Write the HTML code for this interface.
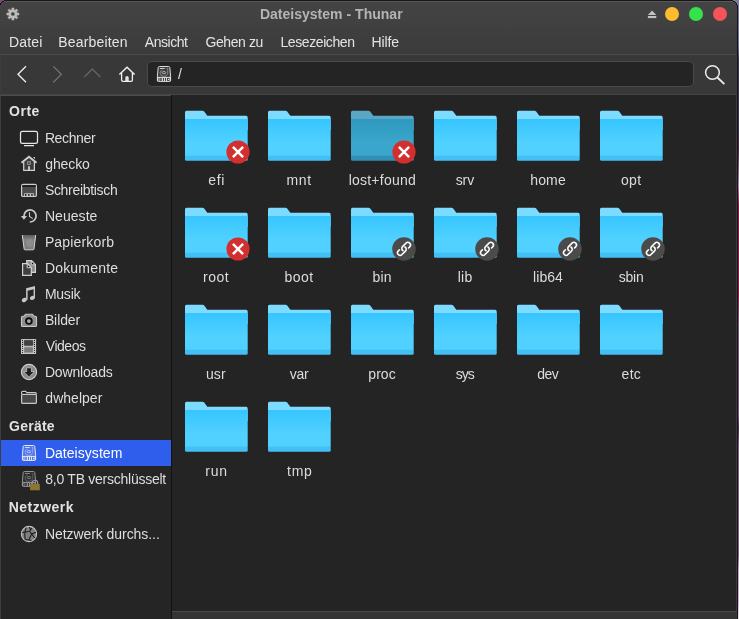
<!DOCTYPE html>
<html><head><meta charset="utf-8"><title>Dateisystem - Thunar</title><style>
*{box-sizing:border-box}
html,body{margin:0;padding:0}
body{width:739px;height:619px;overflow:hidden;position:relative;background:#6f6a8e;font-family:"Liberation Sans", sans-serif;}
#bgl{position:absolute;left:0;top:0;width:8px;height:8px;background:#7d4b79}
#bgr{position:absolute;left:731px;top:0;width:8px;height:619px;background:linear-gradient(#7d7a9b 0,#75729a 45px,#3c3752 60px,#3a3450 125px,#4a2a48 150px,#a88aa8 185px,#8a2048 205px,#8c2248 295px,#7a5a7a 325px,#7a5a7c 415px,#4a3048 428px,#806080 445px,#806282 555px,#c0a2c2 570px,#c8b0cc 600px,#e8e0ea 619px)}
#win{position:absolute;left:0;top:0;width:738px;height:619px;background:#242424;overflow:hidden;clip-path:polygon(4px 0,733px 0,733px 1px,735px 1px,735px 2px,736px 2px,736px 3px,737px 3px,737px 5px,738px 5px,738px 619px,0 619px,0 3px,1px 3px,1px 2px,2px 2px,2px 1px,4px 1px)}
#tb{position:absolute;left:0;top:0;width:738px;height:28px;background:linear-gradient(#444444,#404040)}
#tbl0{position:absolute;left:0;top:0;width:733px;height:1px;background:#161616}
#tbl1{position:absolute;left:4px;top:1px;width:729px;height:1px;background:#585858}
#mb{position:absolute;left:0;top:28px;width:738px;height:26px;background:linear-gradient(#3f3f3f,#3b3b3b)}
#sep1{position:absolute;left:0;top:54px;width:738px;height:1px;background:#4b4b4b}
#tool{position:absolute;left:0;top:55px;width:738px;height:39px;background:#383838}
#sep2{position:absolute;left:0;top:94px;width:738px;height:1px;background:#464646}
#side{position:absolute;left:1px;top:95px;width:170px;height:524px;background:#252525}
#sep3{position:absolute;left:0;top:95px;width:171px;height:1px;background:#4b4b4b}
#lb{position:absolute;left:0;top:28px;width:1px;height:591px;background:#3d3d3d}
#vsep{position:absolute;left:171px;top:95px;width:1px;height:524px;background:#121212}
#main{position:absolute;left:172px;top:95px;width:564px;height:516px;background:#242424}
#stat{position:absolute;left:172px;top:611px;width:564px;height:8px;background:#343434;border-top:1px solid #494949}
#rb1{position:absolute;left:736px;top:28px;width:1px;height:615px;background:#3a3a3a}
#rb2{position:absolute;left:737px;top:5px;width:1px;height:615px;background:#161616}
#sel{position:absolute;left:1px;top:440px;width:170px;height:26px;background:#2f5eec}
#path{position:absolute;left:147px;top:61px;width:547px;height:26px;background:#242424;border:1px solid #4a4a4a;border-radius:5px}
.t{position:absolute;white-space:nowrap;line-height:normal}
#txt{position:absolute;left:0;top:0;width:739px;height:619px;will-change:transform;transform:translateZ(0)}
.fw{position:absolute;width:66px;height:52px}
.fo{position:absolute;left:0;top:0}
.bd{position:absolute;left:42px;top:30px}
.ic{position:absolute}
.px{position:absolute;width:1px;height:1px}
.dot{position:absolute;width:14.4px;height:14.4px;border-radius:50%;top:6.8px}
</style></head><body>
<div id="bgl"></div><div id="bgr"></div>
<div id="win">
<div id="tb"></div><div id="tbl0"></div><div id="tbl1"></div>
<div id="mb"></div><div id="sep1"></div><div id="tool"></div><div id="sep2"></div>
<div id="lb"></div>
<div id="side"></div><div id="sep3"></div><div id="vsep"></div><div id="main"></div><div id="stat"></div>
<div id="sel"></div>
<div id="path"></div>
<div id="rb1"></div><div id="rb2"></div><i class="px" style="left:2px;top:1px;background:#141414"></i><i class="px" style="left:3px;top:1px;background:#141414"></i><i class="px" style="left:1px;top:2px;background:#141414"></i><i class="px" style="left:0px;top:3px;background:#141414"></i><i class="px" style="left:0px;top:4px;background:#141414"></i><i class="px" style="left:733px;top:1px;background:#141414"></i><i class="px" style="left:734px;top:1px;background:#141414"></i><i class="px" style="left:735px;top:2px;background:#141414"></i><i class="px" style="left:736px;top:3px;background:#141414"></i><i class="px" style="left:736px;top:4px;background:#141414"></i>
<div class="dot" style="left:664.9px;background:#fdbc30"></div>
<div class="dot" style="left:688.9px;background:#34e24b"></div>
<div class="dot" style="left:712.9px;background:#f5535a"></div>
<svg class="ic" style="left:0;top:0" width="739" height="619" viewBox="0 0 739 619">
<path d="M11.84 9.83 L11.86 7.94 L13.94 7.94 L13.96 9.83 L15.09 10.30 L16.45 8.98 L17.92 10.45 L16.60 11.81 L17.07 12.94 L18.96 12.96 L18.96 15.04 L17.07 15.06 L16.60 16.19 L17.92 17.55 L16.45 19.02 L15.09 17.70 L13.96 18.17 L13.94 20.06 L11.86 20.06 L11.84 18.17 L10.71 17.70 L9.35 19.02 L7.88 17.55 L9.20 16.19 L8.73 15.06 L6.84 15.04 L6.84 12.96 L8.73 12.94 L9.20 11.81 L7.88 10.45 L9.35 8.98 L10.71 10.30 Z M15.00 14.0 A2.1 2.1 0 1 0 10.80 14.0 A2.1 2.1 0 1 0 15.00 14.0 Z" fill="#bcbcbc" fill-rule="evenodd" stroke="#bcbcbc" stroke-width="0.5" stroke-linejoin="round"/>
<path d="M652.1 10.4 L656.3 15 H647.9 Z" fill="#c2c2c2"/><rect x="647.9" y="16" width="8.4" height="2.1" fill="#c2c2c2"/>
<path d="M26 66.3 L18 74.3 L26 82.3" fill="none" stroke="#f2f2f2" stroke-width="1.3"/>
<path d="M53.3 66.3 L61.3 74.3 L53.3 82.3" fill="none" stroke="#7c7c7c" stroke-width="1.1"/>
<path d="M84.3 77 L92.3 69 L100.3 77" fill="none" stroke="#6a6a6a" stroke-width="1.1"/>
<path d="M119.4 74.6 L127 67.2 L134.6 74.6" fill="none" stroke="#f0f0f0" stroke-width="1.4" stroke-linejoin="miter"/>
<path d="M121.6 73 V80 Q121.6 81.4 123 81.4 H131 Q132.4 81.4 132.4 80 V73" fill="none" stroke="#f0f0f0" stroke-width="1.3"/>
<path d="M125.3 81 V77.6 A1.7 1.7 0 0 1 128.7 77.6 V81 Z" fill="#e2e2e2"/>
<circle cx="712.45" cy="72.5" r="6.85" fill="none" stroke="#ececec" stroke-width="1.5"/><path d="M717.4 77.5 L724.4 84.2" stroke="#ececec" stroke-width="1.85" fill="none"/>
<g transform="translate(135,-379)">
<path d="M24.6 445.5 H33.4 Q34.6 445.5 34.8 446.6 L35.6 455.6 V459.6 Q35.6 460.4 34.8 460.4 H23.2 Q22.4 460.4 22.4 459.6 V455.6 L23.2 446.6 Q23.4 445.5 24.6 445.5 Z" fill="#e6e6e6" fill-opacity="0.14" stroke="#e6e6e6" stroke-width="0.95"/>
<path d="M22.4 456.4 H35.6" stroke="#e6e6e6" stroke-width="1" fill="none"/>
<path d="M22.9 456 V460" stroke="#e6e6e6" stroke-width="1" fill="none"/><path d="M35.1 456 V460" stroke="#e6e6e6" stroke-width="1" fill="none"/>
<g fill="#e6e6e6"><rect x="24.2" y="456.8" width="0.6" height="3.3" fill-opacity="0.75"/><rect x="26.8" y="456.8" width="1.1" height="3.3"/><rect x="29" y="456.8" width="0.95" height="3.3"/><rect x="31" y="456.8" width="0.95" height="3.3"/><rect x="25.2" y="457.5" width="1.2" height="1.6" fill-opacity="0.35"/><rect x="33" y="457.9" width="1.1" height="1.1"/></g>
<rect x="25" y="447" width="4.8" height="0.9" fill="#e6e6e6" fill-opacity="0.9"/>
<ellipse cx="28.9" cy="451.6" rx="1.8" ry="1.1" fill="none" stroke="#e6e6e6" stroke-width="0.8" stroke-opacity="0.85"/>
<path d="M31.5 447.4 H32.7 V452.5 A3.9 3.6 0 0 1 25 452 A3.9 3.4 0 0 1 27.5 448.9" fill="none" stroke="#e6e6e6" stroke-width="0.7" stroke-opacity="0.6"/>
</g>
<rect x="20.5" y="131.4" width="17" height="12" rx="1.9" fill="none" stroke="#e6e6e6" stroke-width="1.25"/><path d="M24 145.5 H34" stroke="#e6e6e6" stroke-width="1.25"/>
<path d="M23.7 162.4 V170.4 H34.4 V162.4 L29 157.8 Z" fill="#3c3c3c"/>
<path d="M23.7 162 V170.4 H34.4 V162" fill="none" stroke="#d2d2d2" stroke-width="1.2"/>
<path d="M21.5 162.7 L29 156.7 L36.5 162.7" fill="none" stroke="#cdcdcd" stroke-width="2"/>
<rect x="27.1" y="161.2" width="3.7" height="3.7" fill="#929292"/><rect x="28.3" y="162.4" width="1.3" height="1.3" fill="#0c0c0c"/>
<rect x="28.1" y="166.2" width="1.8" height="4" fill="#cfcfcf"/>
<path d="M33 157.2 L35 156.9 L35 159.2 Z" fill="#cfcfcf"/>
<rect x="21.6" y="184.4" width="14.8" height="12.1" rx="1.6" fill="#4b4b4b" stroke="#d0d0d0" stroke-width="1.2"/>
<rect x="22.2" y="185.2" width="13.6" height="1.7" fill="#1c1c1c"/>
<rect x="24.1" y="193.2" width="9.8" height="3.3" rx="0.8" fill="#c4c4c4"/>
<g fill="#050505"><rect x="25" y="194.2" width="1.5" height="1.5"/><rect x="28.1" y="194.2" width="1.5" height="1.5"/><rect x="31.2" y="194.2" width="1.5" height="1.5"/></g>
<path d="M24 215.9 A6.05 6.05 0 1 1 30.4 222.0" fill="none" stroke="#cacaca" stroke-width="1.7" stroke-linecap="round"/>
<path d="M20.9 216.1 H27 L23.95 219.8 Z" fill="#cacaca"/>
<path d="M29.5 212.3 V216.5 L32.8 218.6" fill="none" stroke="#cacaca" stroke-width="1.1"/>
<defs><linearGradient id="tg" x1="0" y1="0" x2="0" y2="1"><stop offset="0" stop-color="#5c5c5c"/><stop offset="0.35" stop-color="#858585"/><stop offset="1" stop-color="#7c7c7c"/></linearGradient></defs>
<path d="M22.2 235 H35.8 L34 249.4 H24.1 Z" fill="url(#tg)"/>
<ellipse cx="29.6" cy="243.2" rx="3.4" ry="4.2" fill="#9c9c9c" fill-opacity="0.45"/>
<path d="M22.3 235 L24.2 249.3 Q24.3 249.8 24.9 249.8 H33.2 Q33.8 249.8 33.9 249.3 L35.7 235" fill="none" stroke="#d4d4d4" stroke-width="1"/>
<path d="M26.7 260.7 H31.6 L35.4 264.5 V272.3 H26.7 Z" fill="#8c8c8c" stroke="#d2d2d2" stroke-width="1.2"/>
<path d="M31.3 261 V264.8 H35.2 Z" fill="#0a0a0a" stroke="#d2d2d2" stroke-width="1"/>
<path d="M22.6 263.6 H27.5 L31.3 267.4 V275.4 H22.6 Z" fill="#3f3f3f" stroke="#d2d2d2" stroke-width="1.2"/>
<path d="M27.2 263.9 V267.7 H31.1 Z" fill="#0a0a0a" stroke="#d2d2d2" stroke-width="1"/>
<path d="M26.1 288.3 L35 285.9 V297.6 H33.6 V289.2 L27.6 290.8 V299.8 H26.1 Z" fill="#c6c6c6"/>
<ellipse cx="24.3" cy="300" rx="2.6" ry="2" transform="rotate(-20 24.3 300)" fill="#c6c6c6"/><ellipse cx="32.4" cy="297.9" rx="2.6" ry="2" transform="rotate(-20 32.4 297.9)" fill="#c6c6c6"/>
<path d="M22.6 316.3 H23.8 L25.6 314.3 H32.4 L34.2 316.3 H35.4 Q36.5 316.3 36.5 317.4 V325.4 Q36.5 326.5 35.4 326.5 H22.6 Q21.5 326.5 21.5 325.4 V317.4 Q21.5 316.3 22.6 316.3 Z" fill="#8e8e8e" stroke="#c8c8c8" stroke-width="1.1"/>
<circle cx="28.9" cy="321" r="2.85" fill="#bababa" stroke="#0c0c0c" stroke-width="1.95"/><circle cx="28.9" cy="321" r="0.85" fill="#8e8e8e"/>
<rect x="21" y="339" width="15.1" height="15" rx="0.6" fill="#cacaca"/>
<rect x="24.2" y="340.3" width="8.7" height="5.3" rx="0.7" fill="#404040" stroke="#2c2c2c" stroke-width="0.5"/><rect x="24.2" y="347.2" width="8.7" height="5.4" rx="0.7" fill="#7c7c7c" stroke="#8a8a8a" stroke-width="0.4"/>
<g fill="#1a1a1a"><circle cx="22.5" cy="340.40" r="0.6"/><circle cx="22.5" cy="342.42" r="0.6"/><circle cx="22.5" cy="344.44" r="0.6"/><circle cx="22.5" cy="346.46" r="0.6"/><circle cx="22.5" cy="348.48" r="0.6"/><circle cx="22.5" cy="350.50" r="0.6"/><circle cx="22.5" cy="352.52" r="0.6"/><circle cx="34.5" cy="340.40" r="0.6"/><circle cx="34.5" cy="342.42" r="0.6"/><circle cx="34.5" cy="344.44" r="0.6"/><circle cx="34.5" cy="346.46" r="0.6"/><circle cx="34.5" cy="348.48" r="0.6"/><circle cx="34.5" cy="350.50" r="0.6"/><circle cx="34.5" cy="352.52" r="0.6"/></g>
<circle cx="29" cy="372" r="7.6" fill="#8c8c8c" stroke="#d2d2d2" stroke-width="1.1"/>
<path d="M27.1 368.2 H30.9 V372 H33.4 L29 376.5 L24.6 372 H27.1 Z" fill="#222" stroke="#b2b2b2" stroke-width="1.5" stroke-linejoin="miter"/><path d="M27.1 368.2 H30.9 V372 H33.4 L29 376.5 L24.6 372 H27.1 Z" fill="#1f1f1f"/>
<path d="M21.6 394.3 V392.6 Q21.6 391.4 22.8 391.4 H25.6 L26.8 392.6 H35.2 Q36.4 392.6 36.4 393.8 V394.3" fill="#0e0e0e" stroke="#c6c6c6" stroke-width="1.2"/>
<rect x="21.6" y="394.3" width="14.8" height="9.1" rx="1" fill="#494949" stroke="#c6c6c6" stroke-width="1.2"/>
<g transform="translate(0,0)">
<path d="M24.6 445.5 H33.4 Q34.6 445.5 34.8 446.6 L35.6 455.6 V459.6 Q35.6 460.4 34.8 460.4 H23.2 Q22.4 460.4 22.4 459.6 V455.6 L23.2 446.6 Q23.4 445.5 24.6 445.5 Z" fill="#eeeeee" fill-opacity="0.16" stroke="#eeeeee" stroke-width="0.95"/>
<path d="M22.4 456.4 H35.6" stroke="#eeeeee" stroke-width="1" fill="none"/>
<path d="M22.9 456 V460" stroke="#eeeeee" stroke-width="1" fill="none"/><path d="M35.1 456 V460" stroke="#eeeeee" stroke-width="1" fill="none"/>
<g fill="#eeeeee"><rect x="24.2" y="456.8" width="0.6" height="3.3" fill-opacity="0.75"/><rect x="26.8" y="456.8" width="1.1" height="3.3"/><rect x="29" y="456.8" width="0.95" height="3.3"/><rect x="31" y="456.8" width="0.95" height="3.3"/><rect x="25.2" y="457.5" width="1.2" height="1.6" fill-opacity="0.35"/><rect x="33" y="457.9" width="1.1" height="1.1"/></g>
<rect x="25" y="447" width="4.8" height="0.9" fill="#eeeeee" fill-opacity="0.9"/>
<ellipse cx="28.9" cy="451.6" rx="1.8" ry="1.1" fill="none" stroke="#eeeeee" stroke-width="0.8" stroke-opacity="0.85"/>
<path d="M31.5 447.4 H32.7 V452.5 A3.9 3.6 0 0 1 25 452 A3.9 3.4 0 0 1 27.5 448.9" fill="none" stroke="#eeeeee" stroke-width="0.7" stroke-opacity="0.6"/>
</g>
<g transform="translate(0,26)">
<path d="M24.6 445.5 H33.4 Q34.6 445.5 34.8 446.6 L35.6 455.6 V459.6 Q35.6 460.4 34.8 460.4 H23.2 Q22.4 460.4 22.4 459.6 V455.6 L23.2 446.6 Q23.4 445.5 24.6 445.5 Z" fill="#9a9a9a" fill-opacity="0.08" stroke="#9a9a9a" stroke-width="0.95"/>
<path d="M22.4 456.4 H35.6" stroke="#9a9a9a" stroke-width="1" fill="none"/>
<path d="M22.9 456 V460" stroke="#9a9a9a" stroke-width="1" fill="none"/><path d="M35.1 456 V460" stroke="#9a9a9a" stroke-width="1" fill="none"/>
<g fill="#9a9a9a"><rect x="24.2" y="456.8" width="0.6" height="3.3" fill-opacity="0.75"/><rect x="26.8" y="456.8" width="1.1" height="3.3"/><rect x="29" y="456.8" width="0.95" height="3.3"/><rect x="31" y="456.8" width="0.95" height="3.3"/><rect x="25.2" y="457.5" width="1.2" height="1.6" fill-opacity="0.35"/><rect x="33" y="457.9" width="1.1" height="1.1"/></g>
<rect x="25" y="447" width="4.8" height="0.9" fill="#9a9a9a" fill-opacity="0.9"/>
<ellipse cx="28.9" cy="451.6" rx="1.8" ry="1.1" fill="none" stroke="#9a9a9a" stroke-width="0.8" stroke-opacity="0.85"/>
<path d="M31.5 447.4 H32.7 V452.5 A3.9 3.6 0 0 1 25 452 A3.9 3.4 0 0 1 27.5 448.9" fill="none" stroke="#9a9a9a" stroke-width="0.7" stroke-opacity="0.6"/>
</g>
<path d="M32.3 484.5 V482.9 A2.7 2.7 0 0 1 37.7 482.9 V484.5" fill="none" stroke="#9a9a9a" stroke-width="1.1"/>
<rect x="30.1" y="484" width="9.7" height="6.3" fill="#8d7532"/>
<circle cx="29" cy="534" r="7.6" fill="#808080" stroke="#c4c4c4" stroke-width="1.1"/>
<g fill="none" stroke="#1a1a1a" stroke-width="1.05"><path d="M26.2 527.6 Q24 533 25.2 539.6"/><path d="M22.2 532.6 L28.6 531.4"/><path d="M29.4 527 L30.6 529.6 L29.6 531.2 L31.6 534 L34.8 538"/><path d="M31.6 534 L29 539.8"/><path d="M31.6 534 L35.8 532.2"/><path d="M25.2 539.6 L31.4 540.4"/><path d="M30.6 529.6 L32 528"/></g>
</svg><div class="fw" style="left:184px;top:110px"><svg class="fo" width="66" height="52" viewBox="0 0 66 52">
<defs><linearGradient id="gn" x1="0" y1="0" x2="0" y2="1"><stop offset="0" stop-color="#36c5ff"/><stop offset="0.55" stop-color="#50d1ff"/><stop offset="0.87" stop-color="#50d1ff"/><stop offset="0.88" stop-color="#43bff5"/><stop offset="1" stop-color="#43bff5"/></linearGradient></defs>
<path d="M1 2.2 Q1 0.7 2.5 0.7 L18.6 0.7 Q19.6 0.7 20.2 1.5 L23.3 5.8 L62.1 5.8 Q63.7 5.8 63.7 7.4 L63.7 20 L1 20 Z" fill="#7ddbff"/>
<path d="M1 9 L63.7 9 L63.7 49.3 Q63.7 50.8 62.2 50.8 L2.5 50.8 Q1 50.8 1 49.3 Z" fill="url(#gn)"/>
</svg>
<svg class="bd" width="24" height="24" viewBox="0 0 24 24"><circle cx="12" cy="12" r="11.6" fill="#d32f2f"/><path d="M6.9 6.9 L17.1 17.1 M17.1 6.9 L6.9 17.1" stroke="#fff" stroke-width="2.45" fill="none"/></svg>
</div>
<div class="fw" style="left:267px;top:110px"><svg class="fo" width="66" height="52" viewBox="0 0 66 52">
<defs><linearGradient id="gn" x1="0" y1="0" x2="0" y2="1"><stop offset="0" stop-color="#36c5ff"/><stop offset="0.55" stop-color="#50d1ff"/><stop offset="0.87" stop-color="#50d1ff"/><stop offset="0.88" stop-color="#43bff5"/><stop offset="1" stop-color="#43bff5"/></linearGradient></defs>
<path d="M1 2.2 Q1 0.7 2.5 0.7 L18.6 0.7 Q19.6 0.7 20.2 1.5 L23.3 5.8 L62.1 5.8 Q63.7 5.8 63.7 7.4 L63.7 20 L1 20 Z" fill="#7ddbff"/>
<path d="M1 9 L63.7 9 L63.7 49.3 Q63.7 50.8 62.2 50.8 L2.5 50.8 Q1 50.8 1 49.3 Z" fill="url(#gn)"/>
</svg>
</div>
<div class="fw" style="left:350px;top:110px"><svg class="fo" width="66" height="52" viewBox="0 0 66 52">
<defs><linearGradient id="gd" x1="0" y1="0" x2="0" y2="1"><stop offset="0" stop-color="#2f98bf"/><stop offset="0.55" stop-color="#3aa6cc"/><stop offset="0.87" stop-color="#3aa6cc"/><stop offset="0.88" stop-color="#2f8fb4"/><stop offset="1" stop-color="#2f8fb4"/></linearGradient></defs>
<path d="M1 2.2 Q1 0.7 2.5 0.7 L18.6 0.7 Q19.6 0.7 20.2 1.5 L23.3 5.8 L62.1 5.8 Q63.7 5.8 63.7 7.4 L63.7 20 L1 20 Z" fill="#5aa7c4"/>
<path d="M1 9 L63.7 9 L63.7 49.3 Q63.7 50.8 62.2 50.8 L2.5 50.8 Q1 50.8 1 49.3 Z" fill="url(#gd)"/>
</svg>
<svg class="bd" width="24" height="24" viewBox="0 0 24 24"><circle cx="12" cy="12" r="11.6" fill="#d32f2f"/><path d="M6.9 6.9 L17.1 17.1 M17.1 6.9 L6.9 17.1" stroke="#fff" stroke-width="2.45" fill="none"/></svg>
</div>
<div class="fw" style="left:433px;top:110px"><svg class="fo" width="66" height="52" viewBox="0 0 66 52">
<defs><linearGradient id="gn" x1="0" y1="0" x2="0" y2="1"><stop offset="0" stop-color="#36c5ff"/><stop offset="0.55" stop-color="#50d1ff"/><stop offset="0.87" stop-color="#50d1ff"/><stop offset="0.88" stop-color="#43bff5"/><stop offset="1" stop-color="#43bff5"/></linearGradient></defs>
<path d="M1 2.2 Q1 0.7 2.5 0.7 L18.6 0.7 Q19.6 0.7 20.2 1.5 L23.3 5.8 L62.1 5.8 Q63.7 5.8 63.7 7.4 L63.7 20 L1 20 Z" fill="#7ddbff"/>
<path d="M1 9 L63.7 9 L63.7 49.3 Q63.7 50.8 62.2 50.8 L2.5 50.8 Q1 50.8 1 49.3 Z" fill="url(#gn)"/>
</svg>
</div>
<div class="fw" style="left:516px;top:110px"><svg class="fo" width="66" height="52" viewBox="0 0 66 52">
<defs><linearGradient id="gn" x1="0" y1="0" x2="0" y2="1"><stop offset="0" stop-color="#36c5ff"/><stop offset="0.55" stop-color="#50d1ff"/><stop offset="0.87" stop-color="#50d1ff"/><stop offset="0.88" stop-color="#43bff5"/><stop offset="1" stop-color="#43bff5"/></linearGradient></defs>
<path d="M1 2.2 Q1 0.7 2.5 0.7 L18.6 0.7 Q19.6 0.7 20.2 1.5 L23.3 5.8 L62.1 5.8 Q63.7 5.8 63.7 7.4 L63.7 20 L1 20 Z" fill="#7ddbff"/>
<path d="M1 9 L63.7 9 L63.7 49.3 Q63.7 50.8 62.2 50.8 L2.5 50.8 Q1 50.8 1 49.3 Z" fill="url(#gn)"/>
</svg>
</div>
<div class="fw" style="left:599px;top:110px"><svg class="fo" width="66" height="52" viewBox="0 0 66 52">
<defs><linearGradient id="gn" x1="0" y1="0" x2="0" y2="1"><stop offset="0" stop-color="#36c5ff"/><stop offset="0.55" stop-color="#50d1ff"/><stop offset="0.87" stop-color="#50d1ff"/><stop offset="0.88" stop-color="#43bff5"/><stop offset="1" stop-color="#43bff5"/></linearGradient></defs>
<path d="M1 2.2 Q1 0.7 2.5 0.7 L18.6 0.7 Q19.6 0.7 20.2 1.5 L23.3 5.8 L62.1 5.8 Q63.7 5.8 63.7 7.4 L63.7 20 L1 20 Z" fill="#7ddbff"/>
<path d="M1 9 L63.7 9 L63.7 49.3 Q63.7 50.8 62.2 50.8 L2.5 50.8 Q1 50.8 1 49.3 Z" fill="url(#gn)"/>
</svg>
</div>
<div class="fw" style="left:184px;top:207px"><svg class="fo" width="66" height="52" viewBox="0 0 66 52">
<defs><linearGradient id="gn" x1="0" y1="0" x2="0" y2="1"><stop offset="0" stop-color="#36c5ff"/><stop offset="0.55" stop-color="#50d1ff"/><stop offset="0.87" stop-color="#50d1ff"/><stop offset="0.88" stop-color="#43bff5"/><stop offset="1" stop-color="#43bff5"/></linearGradient></defs>
<path d="M1 2.2 Q1 0.7 2.5 0.7 L18.6 0.7 Q19.6 0.7 20.2 1.5 L23.3 5.8 L62.1 5.8 Q63.7 5.8 63.7 7.4 L63.7 20 L1 20 Z" fill="#7ddbff"/>
<path d="M1 9 L63.7 9 L63.7 49.3 Q63.7 50.8 62.2 50.8 L2.5 50.8 Q1 50.8 1 49.3 Z" fill="url(#gn)"/>
</svg>
<svg class="bd" width="24" height="24" viewBox="0 0 24 24"><circle cx="12" cy="12" r="11.6" fill="#d32f2f"/><path d="M6.9 6.9 L17.1 17.1 M17.1 6.9 L6.9 17.1" stroke="#fff" stroke-width="2.45" fill="none"/></svg>
</div>
<div class="fw" style="left:267px;top:207px"><svg class="fo" width="66" height="52" viewBox="0 0 66 52">
<defs><linearGradient id="gn" x1="0" y1="0" x2="0" y2="1"><stop offset="0" stop-color="#36c5ff"/><stop offset="0.55" stop-color="#50d1ff"/><stop offset="0.87" stop-color="#50d1ff"/><stop offset="0.88" stop-color="#43bff5"/><stop offset="1" stop-color="#43bff5"/></linearGradient></defs>
<path d="M1 2.2 Q1 0.7 2.5 0.7 L18.6 0.7 Q19.6 0.7 20.2 1.5 L23.3 5.8 L62.1 5.8 Q63.7 5.8 63.7 7.4 L63.7 20 L1 20 Z" fill="#7ddbff"/>
<path d="M1 9 L63.7 9 L63.7 49.3 Q63.7 50.8 62.2 50.8 L2.5 50.8 Q1 50.8 1 49.3 Z" fill="url(#gn)"/>
</svg>
</div>
<div class="fw" style="left:350px;top:207px"><svg class="fo" width="66" height="52" viewBox="0 0 66 52">
<defs><linearGradient id="gn" x1="0" y1="0" x2="0" y2="1"><stop offset="0" stop-color="#36c5ff"/><stop offset="0.55" stop-color="#50d1ff"/><stop offset="0.87" stop-color="#50d1ff"/><stop offset="0.88" stop-color="#43bff5"/><stop offset="1" stop-color="#43bff5"/></linearGradient></defs>
<path d="M1 2.2 Q1 0.7 2.5 0.7 L18.6 0.7 Q19.6 0.7 20.2 1.5 L23.3 5.8 L62.1 5.8 Q63.7 5.8 63.7 7.4 L63.7 20 L1 20 Z" fill="#7ddbff"/>
<path d="M1 9 L63.7 9 L63.7 49.3 Q63.7 50.8 62.2 50.8 L2.5 50.8 Q1 50.8 1 49.3 Z" fill="url(#gn)"/>
</svg>
<svg class="bd" width="24" height="24" viewBox="0 0 24 24"><circle cx="12" cy="12" r="11.8" fill="#4b4b4b"/><g transform="translate(12 11.85) rotate(-45)" fill="none" stroke="#fff" stroke-width="1.55" stroke-linecap="round"><path d="M3.8 2.6 H5.45 A2.6 2.6 0 0 0 5.45 -2.6 H0.55 A2.6 2.6 0 0 0 -1.96 0.67"/><path d="M3.8 2.6 H5.45 A2.6 2.6 0 0 0 5.45 -2.6 H0.55 A2.6 2.6 0 0 0 -1.96 0.67" transform="rotate(180)"/></g></svg>
</div>
<div class="fw" style="left:433px;top:207px"><svg class="fo" width="66" height="52" viewBox="0 0 66 52">
<defs><linearGradient id="gn" x1="0" y1="0" x2="0" y2="1"><stop offset="0" stop-color="#36c5ff"/><stop offset="0.55" stop-color="#50d1ff"/><stop offset="0.87" stop-color="#50d1ff"/><stop offset="0.88" stop-color="#43bff5"/><stop offset="1" stop-color="#43bff5"/></linearGradient></defs>
<path d="M1 2.2 Q1 0.7 2.5 0.7 L18.6 0.7 Q19.6 0.7 20.2 1.5 L23.3 5.8 L62.1 5.8 Q63.7 5.8 63.7 7.4 L63.7 20 L1 20 Z" fill="#7ddbff"/>
<path d="M1 9 L63.7 9 L63.7 49.3 Q63.7 50.8 62.2 50.8 L2.5 50.8 Q1 50.8 1 49.3 Z" fill="url(#gn)"/>
</svg>
<svg class="bd" width="24" height="24" viewBox="0 0 24 24"><circle cx="12" cy="12" r="11.8" fill="#4b4b4b"/><g transform="translate(12 11.85) rotate(-45)" fill="none" stroke="#fff" stroke-width="1.55" stroke-linecap="round"><path d="M3.8 2.6 H5.45 A2.6 2.6 0 0 0 5.45 -2.6 H0.55 A2.6 2.6 0 0 0 -1.96 0.67"/><path d="M3.8 2.6 H5.45 A2.6 2.6 0 0 0 5.45 -2.6 H0.55 A2.6 2.6 0 0 0 -1.96 0.67" transform="rotate(180)"/></g></svg>
</div>
<div class="fw" style="left:516px;top:207px"><svg class="fo" width="66" height="52" viewBox="0 0 66 52">
<defs><linearGradient id="gn" x1="0" y1="0" x2="0" y2="1"><stop offset="0" stop-color="#36c5ff"/><stop offset="0.55" stop-color="#50d1ff"/><stop offset="0.87" stop-color="#50d1ff"/><stop offset="0.88" stop-color="#43bff5"/><stop offset="1" stop-color="#43bff5"/></linearGradient></defs>
<path d="M1 2.2 Q1 0.7 2.5 0.7 L18.6 0.7 Q19.6 0.7 20.2 1.5 L23.3 5.8 L62.1 5.8 Q63.7 5.8 63.7 7.4 L63.7 20 L1 20 Z" fill="#7ddbff"/>
<path d="M1 9 L63.7 9 L63.7 49.3 Q63.7 50.8 62.2 50.8 L2.5 50.8 Q1 50.8 1 49.3 Z" fill="url(#gn)"/>
</svg>
<svg class="bd" width="24" height="24" viewBox="0 0 24 24"><circle cx="12" cy="12" r="11.8" fill="#4b4b4b"/><g transform="translate(12 11.85) rotate(-45)" fill="none" stroke="#fff" stroke-width="1.55" stroke-linecap="round"><path d="M3.8 2.6 H5.45 A2.6 2.6 0 0 0 5.45 -2.6 H0.55 A2.6 2.6 0 0 0 -1.96 0.67"/><path d="M3.8 2.6 H5.45 A2.6 2.6 0 0 0 5.45 -2.6 H0.55 A2.6 2.6 0 0 0 -1.96 0.67" transform="rotate(180)"/></g></svg>
</div>
<div class="fw" style="left:599px;top:207px"><svg class="fo" width="66" height="52" viewBox="0 0 66 52">
<defs><linearGradient id="gn" x1="0" y1="0" x2="0" y2="1"><stop offset="0" stop-color="#36c5ff"/><stop offset="0.55" stop-color="#50d1ff"/><stop offset="0.87" stop-color="#50d1ff"/><stop offset="0.88" stop-color="#43bff5"/><stop offset="1" stop-color="#43bff5"/></linearGradient></defs>
<path d="M1 2.2 Q1 0.7 2.5 0.7 L18.6 0.7 Q19.6 0.7 20.2 1.5 L23.3 5.8 L62.1 5.8 Q63.7 5.8 63.7 7.4 L63.7 20 L1 20 Z" fill="#7ddbff"/>
<path d="M1 9 L63.7 9 L63.7 49.3 Q63.7 50.8 62.2 50.8 L2.5 50.8 Q1 50.8 1 49.3 Z" fill="url(#gn)"/>
</svg>
<svg class="bd" width="24" height="24" viewBox="0 0 24 24"><circle cx="12" cy="12" r="11.8" fill="#4b4b4b"/><g transform="translate(12 11.85) rotate(-45)" fill="none" stroke="#fff" stroke-width="1.55" stroke-linecap="round"><path d="M3.8 2.6 H5.45 A2.6 2.6 0 0 0 5.45 -2.6 H0.55 A2.6 2.6 0 0 0 -1.96 0.67"/><path d="M3.8 2.6 H5.45 A2.6 2.6 0 0 0 5.45 -2.6 H0.55 A2.6 2.6 0 0 0 -1.96 0.67" transform="rotate(180)"/></g></svg>
</div>
<div class="fw" style="left:184px;top:304px"><svg class="fo" width="66" height="52" viewBox="0 0 66 52">
<defs><linearGradient id="gn" x1="0" y1="0" x2="0" y2="1"><stop offset="0" stop-color="#36c5ff"/><stop offset="0.55" stop-color="#50d1ff"/><stop offset="0.87" stop-color="#50d1ff"/><stop offset="0.88" stop-color="#43bff5"/><stop offset="1" stop-color="#43bff5"/></linearGradient></defs>
<path d="M1 2.2 Q1 0.7 2.5 0.7 L18.6 0.7 Q19.6 0.7 20.2 1.5 L23.3 5.8 L62.1 5.8 Q63.7 5.8 63.7 7.4 L63.7 20 L1 20 Z" fill="#7ddbff"/>
<path d="M1 9 L63.7 9 L63.7 49.3 Q63.7 50.8 62.2 50.8 L2.5 50.8 Q1 50.8 1 49.3 Z" fill="url(#gn)"/>
</svg>
</div>
<div class="fw" style="left:267px;top:304px"><svg class="fo" width="66" height="52" viewBox="0 0 66 52">
<defs><linearGradient id="gn" x1="0" y1="0" x2="0" y2="1"><stop offset="0" stop-color="#36c5ff"/><stop offset="0.55" stop-color="#50d1ff"/><stop offset="0.87" stop-color="#50d1ff"/><stop offset="0.88" stop-color="#43bff5"/><stop offset="1" stop-color="#43bff5"/></linearGradient></defs>
<path d="M1 2.2 Q1 0.7 2.5 0.7 L18.6 0.7 Q19.6 0.7 20.2 1.5 L23.3 5.8 L62.1 5.8 Q63.7 5.8 63.7 7.4 L63.7 20 L1 20 Z" fill="#7ddbff"/>
<path d="M1 9 L63.7 9 L63.7 49.3 Q63.7 50.8 62.2 50.8 L2.5 50.8 Q1 50.8 1 49.3 Z" fill="url(#gn)"/>
</svg>
</div>
<div class="fw" style="left:350px;top:304px"><svg class="fo" width="66" height="52" viewBox="0 0 66 52">
<defs><linearGradient id="gn" x1="0" y1="0" x2="0" y2="1"><stop offset="0" stop-color="#36c5ff"/><stop offset="0.55" stop-color="#50d1ff"/><stop offset="0.87" stop-color="#50d1ff"/><stop offset="0.88" stop-color="#43bff5"/><stop offset="1" stop-color="#43bff5"/></linearGradient></defs>
<path d="M1 2.2 Q1 0.7 2.5 0.7 L18.6 0.7 Q19.6 0.7 20.2 1.5 L23.3 5.8 L62.1 5.8 Q63.7 5.8 63.7 7.4 L63.7 20 L1 20 Z" fill="#7ddbff"/>
<path d="M1 9 L63.7 9 L63.7 49.3 Q63.7 50.8 62.2 50.8 L2.5 50.8 Q1 50.8 1 49.3 Z" fill="url(#gn)"/>
</svg>
</div>
<div class="fw" style="left:433px;top:304px"><svg class="fo" width="66" height="52" viewBox="0 0 66 52">
<defs><linearGradient id="gn" x1="0" y1="0" x2="0" y2="1"><stop offset="0" stop-color="#36c5ff"/><stop offset="0.55" stop-color="#50d1ff"/><stop offset="0.87" stop-color="#50d1ff"/><stop offset="0.88" stop-color="#43bff5"/><stop offset="1" stop-color="#43bff5"/></linearGradient></defs>
<path d="M1 2.2 Q1 0.7 2.5 0.7 L18.6 0.7 Q19.6 0.7 20.2 1.5 L23.3 5.8 L62.1 5.8 Q63.7 5.8 63.7 7.4 L63.7 20 L1 20 Z" fill="#7ddbff"/>
<path d="M1 9 L63.7 9 L63.7 49.3 Q63.7 50.8 62.2 50.8 L2.5 50.8 Q1 50.8 1 49.3 Z" fill="url(#gn)"/>
</svg>
</div>
<div class="fw" style="left:516px;top:304px"><svg class="fo" width="66" height="52" viewBox="0 0 66 52">
<defs><linearGradient id="gn" x1="0" y1="0" x2="0" y2="1"><stop offset="0" stop-color="#36c5ff"/><stop offset="0.55" stop-color="#50d1ff"/><stop offset="0.87" stop-color="#50d1ff"/><stop offset="0.88" stop-color="#43bff5"/><stop offset="1" stop-color="#43bff5"/></linearGradient></defs>
<path d="M1 2.2 Q1 0.7 2.5 0.7 L18.6 0.7 Q19.6 0.7 20.2 1.5 L23.3 5.8 L62.1 5.8 Q63.7 5.8 63.7 7.4 L63.7 20 L1 20 Z" fill="#7ddbff"/>
<path d="M1 9 L63.7 9 L63.7 49.3 Q63.7 50.8 62.2 50.8 L2.5 50.8 Q1 50.8 1 49.3 Z" fill="url(#gn)"/>
</svg>
</div>
<div class="fw" style="left:599px;top:304px"><svg class="fo" width="66" height="52" viewBox="0 0 66 52">
<defs><linearGradient id="gn" x1="0" y1="0" x2="0" y2="1"><stop offset="0" stop-color="#36c5ff"/><stop offset="0.55" stop-color="#50d1ff"/><stop offset="0.87" stop-color="#50d1ff"/><stop offset="0.88" stop-color="#43bff5"/><stop offset="1" stop-color="#43bff5"/></linearGradient></defs>
<path d="M1 2.2 Q1 0.7 2.5 0.7 L18.6 0.7 Q19.6 0.7 20.2 1.5 L23.3 5.8 L62.1 5.8 Q63.7 5.8 63.7 7.4 L63.7 20 L1 20 Z" fill="#7ddbff"/>
<path d="M1 9 L63.7 9 L63.7 49.3 Q63.7 50.8 62.2 50.8 L2.5 50.8 Q1 50.8 1 49.3 Z" fill="url(#gn)"/>
</svg>
</div>
<div class="fw" style="left:184px;top:401px"><svg class="fo" width="66" height="52" viewBox="0 0 66 52">
<defs><linearGradient id="gn" x1="0" y1="0" x2="0" y2="1"><stop offset="0" stop-color="#36c5ff"/><stop offset="0.55" stop-color="#50d1ff"/><stop offset="0.87" stop-color="#50d1ff"/><stop offset="0.88" stop-color="#43bff5"/><stop offset="1" stop-color="#43bff5"/></linearGradient></defs>
<path d="M1 2.2 Q1 0.7 2.5 0.7 L18.6 0.7 Q19.6 0.7 20.2 1.5 L23.3 5.8 L62.1 5.8 Q63.7 5.8 63.7 7.4 L63.7 20 L1 20 Z" fill="#7ddbff"/>
<path d="M1 9 L63.7 9 L63.7 49.3 Q63.7 50.8 62.2 50.8 L2.5 50.8 Q1 50.8 1 49.3 Z" fill="url(#gn)"/>
</svg>
</div>
<div class="fw" style="left:267px;top:401px"><svg class="fo" width="66" height="52" viewBox="0 0 66 52">
<defs><linearGradient id="gn" x1="0" y1="0" x2="0" y2="1"><stop offset="0" stop-color="#36c5ff"/><stop offset="0.55" stop-color="#50d1ff"/><stop offset="0.87" stop-color="#50d1ff"/><stop offset="0.88" stop-color="#43bff5"/><stop offset="1" stop-color="#43bff5"/></linearGradient></defs>
<path d="M1 2.2 Q1 0.7 2.5 0.7 L18.6 0.7 Q19.6 0.7 20.2 1.5 L23.3 5.8 L62.1 5.8 Q63.7 5.8 63.7 7.4 L63.7 20 L1 20 Z" fill="#7ddbff"/>
<path d="M1 9 L63.7 9 L63.7 49.3 Q63.7 50.8 62.2 50.8 L2.5 50.8 Q1 50.8 1 49.3 Z" fill="url(#gn)"/>
</svg>
</div><div id="txt"><div class="t" style="left:259.90px;top:6.23px;font-size:14px;font-weight:700;color:#b4b4b4;letter-spacing:0.017px">Dateisystem - Thunar</div>
<div class="t" style="left:8.89px;top:34.03px;font-size:14px;font-weight:400;color:#e4e4e4;letter-spacing:0.206px">Datei</div>
<div class="t" style="left:58.29px;top:34.03px;font-size:14px;font-weight:400;color:#e4e4e4;letter-spacing:0.168px">Bearbeiten</div>
<div class="t" style="left:144.80px;top:34.03px;font-size:14px;font-weight:400;color:#e4e4e4;letter-spacing:-0.454px">Ansicht</div>
<div class="t" style="left:205.50px;top:34.03px;font-size:14px;font-weight:400;color:#e4e4e4;letter-spacing:-0.424px">Gehen zu</div>
<div class="t" style="left:280.49px;top:34.03px;font-size:14px;font-weight:400;color:#e4e4e4;letter-spacing:-0.412px">Lesezeichen</div>
<div class="t" style="left:371.49px;top:34.03px;font-size:14px;font-weight:400;color:#e4e4e4;letter-spacing:-0.110px">Hilfe</div>
<div class="t" style="left:178.00px;top:66.33px;font-size:14px;font-weight:400;color:#e0e0e0;letter-spacing:0.000px">/</div>
<div class="t" style="left:9.12px;top:103.03px;font-size:14px;font-weight:700;color:#e2e2e2;letter-spacing:0.469px">Orte</div>
<div class="t" style="left:9.11px;top:418.03px;font-size:14px;font-weight:700;color:#e2e2e2;letter-spacing:0.227px">Geräte</div>
<div class="t" style="left:8.70px;top:499.03px;font-size:14px;font-weight:700;color:#e2e2e2;letter-spacing:0.488px">Netzwerk</div>
<div class="t" style="left:44.89px;top:129.83px;font-size:14px;font-weight:400;color:#dedede;letter-spacing:-0.365px">Rechner</div>
<div class="t" style="left:45.33px;top:155.83px;font-size:14px;font-weight:400;color:#dedede;letter-spacing:-0.139px">ghecko</div>
<div class="t" style="left:44.90px;top:181.83px;font-size:14px;font-weight:400;color:#dedede;letter-spacing:-0.304px">Schreibtisch</div>
<div class="t" style="left:44.89px;top:207.83px;font-size:14px;font-weight:400;color:#dedede;letter-spacing:0.060px">Neueste</div>
<div class="t" style="left:44.89px;top:233.83px;font-size:14px;font-weight:400;color:#dedede;letter-spacing:0.157px">Papierkorb</div>
<div class="t" style="left:44.89px;top:259.83px;font-size:14px;font-weight:400;color:#dedede;letter-spacing:0.201px">Dokumente</div>
<div class="t" style="left:44.89px;top:285.83px;font-size:14px;font-weight:400;color:#dedede;letter-spacing:-0.225px">Musik</div>
<div class="t" style="left:44.89px;top:311.83px;font-size:14px;font-weight:400;color:#dedede;letter-spacing:-0.099px">Bilder</div>
<div class="t" style="left:45.77px;top:337.83px;font-size:14px;font-weight:400;color:#dedede;letter-spacing:-0.473px">Videos</div>
<div class="t" style="left:44.89px;top:363.83px;font-size:14px;font-weight:400;color:#dedede;letter-spacing:-0.165px">Downloads</div>
<div class="t" style="left:45.33px;top:389.83px;font-size:14px;font-weight:400;color:#dedede;letter-spacing:0.024px">dwhelper</div>
<div class="t" style="left:44.89px;top:444.83px;font-size:14px;font-weight:400;color:#ffffff;letter-spacing:0.041px">Dateisystem</div>
<div class="t" style="left:45.29px;top:470.83px;font-size:14px;font-weight:400;color:#dedede;letter-spacing:-0.259px">8,0 TB verschlüsselt</div>
<div class="t" style="left:44.89px;top:525.83px;font-size:14px;font-weight:400;color:#dedede;letter-spacing:-0.059px">Netzwerk durchs...</div>
<div class="t" style="left:208.21px;top:171.53px;font-size:14px;font-weight:400;color:#dcdcdc;letter-spacing:0.693px">efi</div>
<div class="t" style="left:286.40px;top:171.53px;font-size:14px;font-weight:400;color:#dcdcdc;letter-spacing:0.666px">mnt</div>
<div class="t" style="left:348.65px;top:171.53px;font-size:14px;font-weight:400;color:#dcdcdc;letter-spacing:0.233px">lost+found</div>
<div class="t" style="left:455.63px;top:171.53px;font-size:14px;font-weight:400;color:#dcdcdc;letter-spacing:-0.027px">srv</div>
<div class="t" style="left:530.25px;top:171.53px;font-size:14px;font-weight:400;color:#dcdcdc;letter-spacing:0.149px">home</div>
<div class="t" style="left:620.91px;top:171.53px;font-size:14px;font-weight:400;color:#dcdcdc;letter-spacing:0.359px">opt</div>
<div class="t" style="left:203.00px;top:268.53px;font-size:14px;font-weight:400;color:#dcdcdc;letter-spacing:0.467px">root</div>
<div class="t" style="left:284.45px;top:268.53px;font-size:14px;font-weight:400;color:#dcdcdc;letter-spacing:0.500px">boot</div>
<div class="t" style="left:372.55px;top:268.53px;font-size:14px;font-weight:400;color:#dcdcdc;letter-spacing:0.150px">bin</div>
<div class="t" style="left:457.70px;top:268.53px;font-size:14px;font-weight:400;color:#dcdcdc;letter-spacing:0.262px">lib</div>
<div class="t" style="left:533.10px;top:268.53px;font-size:14px;font-weight:400;color:#dcdcdc;letter-spacing:0.050px">lib64</div>
<div class="t" style="left:618.83px;top:268.53px;font-size:14px;font-weight:400;color:#dcdcdc;letter-spacing:-0.278px">sbin</div>
<div class="t" style="left:206.05px;top:365.53px;font-size:14px;font-weight:400;color:#dcdcdc;letter-spacing:0.037px">usr</div>
<div class="t" style="left:289.77px;top:365.53px;font-size:14px;font-weight:400;color:#dcdcdc;letter-spacing:-0.222px">var</div>
<div class="t" style="left:368.35px;top:365.53px;font-size:14px;font-weight:400;color:#dcdcdc;letter-spacing:0.034px">proc</div>
<div class="t" style="left:455.63px;top:365.53px;font-size:14px;font-weight:400;color:#dcdcdc;letter-spacing:-0.987px">sys</div>
<div class="t" style="left:537.23px;top:365.53px;font-size:14px;font-weight:400;color:#dcdcdc;letter-spacing:-0.479px">dev</div>
<div class="t" style="left:621.61px;top:365.53px;font-size:14px;font-weight:400;color:#dcdcdc;letter-spacing:0.293px">etc</div>
<div class="t" style="left:205.15px;top:462.53px;font-size:14px;font-weight:400;color:#dcdcdc;letter-spacing:0.826px">run</div>
<div class="t" style="left:287.11px;top:462.53px;font-size:14px;font-weight:400;color:#dcdcdc;letter-spacing:0.660px">tmp</div></div></div></body></html>
